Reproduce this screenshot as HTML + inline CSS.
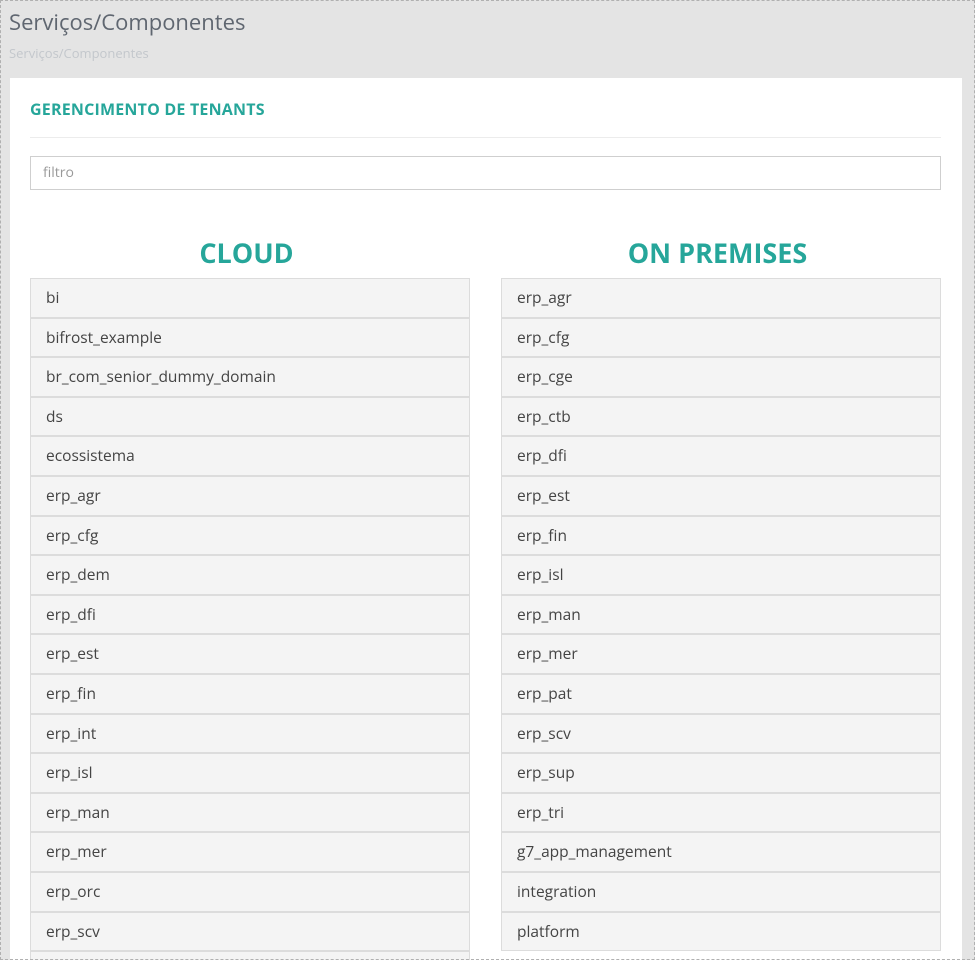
<!DOCTYPE html>
<html><head><meta charset="utf-8"><style>
html{margin:0;padding:0;width:975px;height:960px;overflow:hidden}
body{margin:0;padding:0;width:975px;height:960px;overflow:hidden;background:#e4e4e4;font-family:"Open Sans","Liberation Sans",sans-serif;position:relative}
.frame{position:absolute;left:0;top:0;width:973px;height:958px;border:1px dashed #b0b0b0;z-index:5;pointer-events:none}
h1{position:absolute;left:9px;top:7px;margin:0;font-weight:normal;font-size:22px;color:#5f6670}
.crumb{position:absolute;left:9px;top:44px;font-size:13px;color:#c3c7cc}
.panel{position:absolute;left:10px;top:78px;width:952px;height:882px;background:#fff;overflow:hidden}
.t{position:absolute;left:20px;top:20px;font-size:16px;font-weight:bold;color:#26a69a;letter-spacing:.2px}
.hr{position:absolute;left:20px;top:59px;width:911px;height:1px;background:#ececec}
.inp{position:absolute;left:20px;top:78px;width:909px;height:32px;border:1px solid #cfcfcf;font-size:14px;color:#999;line-height:32px;text-indent:12px}
.col{position:absolute;top:160px;width:441px}
.col h2{margin:0;height:40px;text-align:center;font-size:27px;font-weight:bold;color:#26a69a;line-height:30px;position:relative;left:-4px}
.it{height:37.6px;border:1px solid #dcdcdc;background:#f4f4f4;font-size:15.5px;color:#444;line-height:37px;padding-left:15px;box-sizing:content-box;width:423px}
</style></head><body>
<div class="frame"></div>
<h1>Serviços/Componentes</h1>
<div class="crumb">Serviços/Componentes</div>
<div class="panel">
<div class="t">GERENCIMENTO DE TENANTS</div>
<div class="hr"></div>
<div class="inp">filtro</div>
<div class="col" style="left:20px"><h2>CLOUD</h2>
<div class="it">bi</div><div class="it">bifrost_example</div><div class="it">br_com_senior_dummy_domain</div><div class="it">ds</div><div class="it">ecossistema</div><div class="it">erp_agr</div><div class="it">erp_cfg</div><div class="it">erp_dem</div><div class="it">erp_dfi</div><div class="it">erp_est</div><div class="it">erp_fin</div><div class="it">erp_int</div><div class="it">erp_isl</div><div class="it">erp_man</div><div class="it">erp_mer</div><div class="it">erp_orc</div><div class="it">erp_scv</div><div class="it">erp_sup</div>
</div>
<div class="col" style="left:491px"><h2>ON PREMISES</h2>
<div class="it">erp_agr</div><div class="it">erp_cfg</div><div class="it">erp_cge</div><div class="it">erp_ctb</div><div class="it">erp_dfi</div><div class="it">erp_est</div><div class="it">erp_fin</div><div class="it">erp_isl</div><div class="it">erp_man</div><div class="it">erp_mer</div><div class="it">erp_pat</div><div class="it">erp_scv</div><div class="it">erp_sup</div><div class="it">erp_tri</div><div class="it">g7_app_management</div><div class="it">integration</div><div class="it">platform</div>
</div>
</div>
</body></html>
